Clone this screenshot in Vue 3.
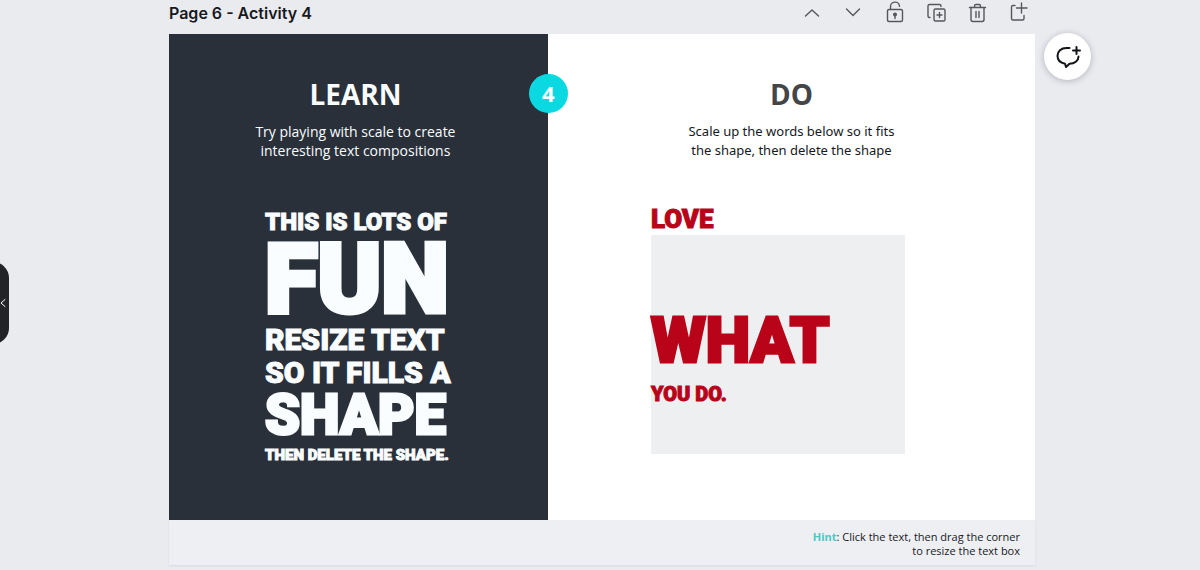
<script setup>
import { ref } from "vue";

const title = ref("Page 6 - Activity 4");

const learnLines = [
  { text: "THIS IS LOTS OF", size: "small" },
  { text: "FUN", size: "huge" },
  { text: "RESIZE TEXT", size: "medium" },
  { text: "SO IT FILLS A", size: "medium" },
  { text: "SHAPE", size: "large" },
  { text: "THEN DELETE THE SHAPE.", size: "tiny" },
];
</script>

<template>
  <div class="editor">
    <button class="side-handle" aria-label="Hide panel">
      <svg width="6" height="10" viewBox="0 0 6 10">
        <path d="M4 1.5 0 5l4 3.5" />
      </svg>
    </button>

    <main class="page">
      <header class="page-header">
        <h1 class="page-title">{{ title }}</h1>
        <div class="tools">
          <button aria-label="Move up">
            <svg viewBox="0 0 24 24"><path d="M3.500 15 10 9l6.500 6" /></svg>
          </button>
          <button aria-label="Move down">
            <svg viewBox="0 0 24 24"><path d="M3.500 8 10 14.500l6.500-6.500" /></svg>
          </button>
          <button aria-label="Lock">
            <svg viewBox="0 0 24 24">
              <rect x="3.500" y="8.500" width="15" height="12" rx="1.500" />
              <path d="M6.500 8.500V6a4.500 4.500 0 0 1 9-.8M11 14v3.500" />
              <circle class="solid" cx="11" cy="13.500" r="1.300" />
            </svg>
          </button>
          <button aria-label="Duplicate page">
            <svg viewBox="0 0 24 24">
              <path d="M5 16.500H4.500A1.500 1.500 0 0 1 3 15V5A1.500 1.500 0 0 1 4.500 3.500h10A1.500 1.500 0 0 1 16 5v.5" />
              <rect x="9" y="8" width="11" height="12" rx="1.500" />
              <path d="M14.500 11.500v5M12 14h5" />
            </svg>
          </button>
          <button aria-label="Delete page">
            <svg viewBox="0 0 24 24">
              <path d="M3.500 6.500h16M8.500 6.500V5A1.500 1.500 0 0 1 10 3.500h3A1.500 1.500 0 0 1 14.500 5v1.500M5 6.500v12a2 2 0 0 0 2 2h9a2 2 0 0 0 2-2v-12M10 10.500v6M13 10.500v6" />
            </svg>
          </button>
          <button aria-label="Add page">
            <svg viewBox="0 0 24 24">
              <path d="M8 4.500H6A1.500 1.500 0 0 0 4.500 6v11.500A1.500 1.500 0 0 0 6 19h9.500a1.500 1.500 0 0 0 1.500-1.500v-3M14.500 2v10M9.500 7H20" />
            </svg>
          </button>
        </div>
      </header>

      <div class="slide">
        <section class="learn">
          <span class="badge">4</span>
          <h2>LEARN</h2>
          <p class="intro">Try playing with scale to create<br />interesting text compositions</p>
          <div class="poster">
            <span v-for="line in learnLines" :key="line.text" class="word" :class="line.size">{{ line.text }}</span>
          </div>
        </section>
        <section class="do">
          <h2>DO</h2>
          <p class="intro">Scale up the words below so it fits<br />the shape, then delete the shape</p>
          <div class="exercise">
            <span class="word love">LOVE</span>
            <div class="shape">
              <span class="word what">WHAT</span>
              <span class="word you-do">YOU DO.</span>
            </div>
          </div>
        </section>
      </div>

      <footer class="hint">
        <p><strong>Hint</strong>: Click the text, then drag the corner<br />to resize the text box</p>
      </footer>
    </main>

    <button class="comment" aria-label="Add comment">
      <svg width="26" height="26" viewBox="0 0 26 26">
        <path d="M14.500 4H11.500C6 4 2.500 7.300 2.500 11.800c0 4.200 3 7.200 7.500 7.900l1 3.300 3.500-3.200c5 0 9-3 9-7.300M21.500 3v7M18 6.500h7" />
      </svg>
    </button>
  </div>
</template>

<style>
body {
  background: #eaebef;
}
</style>

<style scoped>
.editor {
  position: relative;
  padding: 0 165px 4px 169px;
  font-family: "Open Sans", "Noto Sans", sans-serif;
  color: #16191e;
}

button {
  display: flex;
  align-items: center;
  justify-content: center;
  padding: 0;
  border: none;
  background: none;
  cursor: pointer;
}

svg {
  fill: none;
  stroke: currentColor;
  stroke-linecap: round;
  stroke-linejoin: round;
}

h1,
h2,
p {
  margin: 0;
}

.side-handle {
  position: absolute;
  left: -10px;
  top: 262px;
  width: 19px;
  height: 82px;
  padding-left: 8px;
  border-radius: 0 16px 16px 0;
  background: #222327;
  color: #fff;
}

.page-header {
  display: flex;
  align-items: center;
  justify-content: space-between;
  height: 26px;
  padding-bottom: 8px;
}

.page-title {
  font: 600 16px/24px Inter, sans-serif;
}

.tools {
  display: flex;
  gap: 17px;
  padding-right: 4px;
}

.tools button {
  width: 24px;
  height: 24px;
  color: #55575c;
}

.tools svg {
  width: 24px;
  height: 24px;
  stroke-width: 1.4;
}

.tools .solid {
  fill: currentColor;
}

.slide {
  display: flex;
  background: #fff;
}

.learn,
.do {
  box-sizing: border-box;
  min-height: 486px;
  padding-top: 40px;
  text-align: center;
}

.learn {
  position: relative;
  flex: 7;
  background: #29303a;
  color: #fafdff;
}

.do {
  flex: 9;
}

.badge {
  position: absolute;
  top: 40px;
  right: -20px;
  width: 39px;
  height: 39px;
  border-radius: 50%;
  background: #0bd9e2;
  font-size: 22px;
  font-weight: 700;
  line-height: 39px;
}

h2 {
  font-size: 28px;
  font-weight: 700;
  line-height: 40px;
}

.do h2 {
  color: #444547;
}

.learn h2,
.learn .intro {
  padding-right: 6px;
}

.intro {
  margin-top: 8px;
  font-size: 14px;
  line-height: 19px;
}

.do .intro {
  font-family: "Noto Sans", sans-serif;
  font-size: 13px;
}

.word {
  display: block;
  font-family: Roboto, sans-serif;
  font-weight: 900;
  white-space: nowrap;
  -webkit-text-stroke: 1px currentColor;
}

.poster {
  margin: 48px 0 0 96px;
  text-align: left;
}

.small {
  font-size: 24px;
  line-height: 28px;
}

.huge {
  font-size: 96px;
  line-height: 87px;
  -webkit-text-stroke-width: 5px;
}

.medium {
  font-size: 30px;
  line-height: 33px;
}

.large {
  font-size: 56px;
  line-height: 53px;
  -webkit-text-stroke-width: 3px;
}

.tiny {
  font-size: 15px;
  line-height: 27px;
}

.exercise {
  max-width: 254px;
  margin: 43px 0 0 103px;
  text-align: left;
  color: #b80318;
}

.love {
  font-size: 26px;
  line-height: 32px;
}

.shape {
  box-sizing: border-box;
  min-height: 219px;
  padding-top: 74px;
  background: #eeeff1;
}

.what {
  font-size: 63px;
  line-height: 64px;
  -webkit-text-stroke-width: 3px;
}

.you-do {
  margin-top: 8px;
  font-size: 20px;
  line-height: 26px;
}

.hint {
  padding: 10px 15px 7px;
  background: #eeeff2;
  box-shadow: 0 1px 2px rgba(80, 80, 100, 0.1);
  font-size: 11px;
  line-height: 14px;
  text-align: right;
}

.hint strong {
  color: #4dc8c4;
}

.comment {
  position: absolute;
  top: 33px;
  right: 109px;
  width: 47px;
  height: 47px;
  border-radius: 50%;
  background: #fff;
  box-shadow: 0 1px 6px rgba(40, 45, 70, 0.3);
  color: #111318;
}

.comment svg {
  stroke-width: 2;
}
</style>
